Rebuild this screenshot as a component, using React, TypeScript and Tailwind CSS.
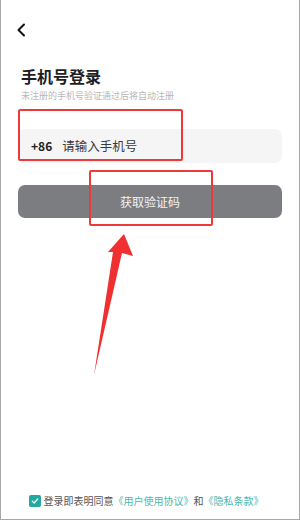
import React from 'react';

const font = { fontFamily: '"Noto Sans CJK SC", "Noto Sans", sans-serif' };

export default function App() {
  return (
    <div
      className="relative flex h-[520px] w-[300px] flex-col overflow-hidden border-x border-b border-[#a8a8a8] bg-white"
      style={font}
    >
      {/* Back */}
      <div className="pl-[15px] pt-[23px]">
        <svg width="10" height="14" viewBox="0 0 10 14" fill="none">
          <path d="M8 1.5 L2.5 7 L8 12.5" stroke="#111" strokeWidth="2" strokeLinecap="round" strokeLinejoin="round" />
        </svg>
      </div>

      {/* Heading */}
      <div className="mt-[28px] px-[20px]">
        <h1 className="text-[16px] font-bold leading-[22px] text-[#1e1e1e]">手机号登录</h1>
        <p className="mt-[3px] text-[9px] leading-[12px] text-[#b8b8b8]">未注册的手机号验证通过后将自动注册</p>
      </div>

      {/* Phone input */}
      <div className="mx-[17px] mt-[27px] flex h-[34px] items-center rounded-[7px] bg-[#f5f5f6]">
        <span className="pl-[13px] text-[12px] font-bold text-[#222]">+86</span>
        <span className="pl-[10px] text-[12.5px] text-[#3a3a3a]">请输入手机号</span>
      </div>

      {/* Get code */}
      <button className="mx-[17px] mt-[22px] flex h-[33px] items-center justify-center rounded-[7px] bg-[#7c7d81] text-[12px] text-[#f2f2f2]">
        获取验证码
      </button>

      {/* Agreement */}
      <div className="mt-auto mb-[11px] flex items-center justify-center pr-[8px] text-[10px] leading-[14px]">
        <span className="mr-[3px] flex h-[12px] w-[12px] items-center justify-center rounded-[2px] bg-[#22a8a0]">
          <svg width="8" height="8" viewBox="0 0 8 8" fill="none">
            <path d="M1.3 4.2 L3.2 6 L6.7 2" stroke="#fff" strokeWidth="1.3" strokeLinecap="round" strokeLinejoin="round" />
          </svg>
        </span>
        <span className="text-[#555]">登录即表明同意</span>
        <span className="text-[#4cb8ae]">《用户使用协议》</span>
        <span className="text-[#555]">和</span>
        <span className="text-[#4cb8ae]">《隐私条款》</span>
      </div>

      {/* Annotation overlays */}
      <div className="pointer-events-none absolute left-[17px] top-[109px] h-[52px] w-[165px] rounded-[2px] border-2 border-[#ec3a3a]" />
      <div className="pointer-events-none absolute left-[88px] top-[170px] h-[56px] w-[124px] rounded-[2px] border-2 border-[#ec3a3a]" />
      <svg className="pointer-events-none absolute left-0 top-0" width="300" height="520" viewBox="0 0 300 520">
        <path d="M123 234 L132 256 L121 253 L93 375 L112 252 L107 252 Z" fill="#f03030" />
      </svg>
    </div>
  );
}
